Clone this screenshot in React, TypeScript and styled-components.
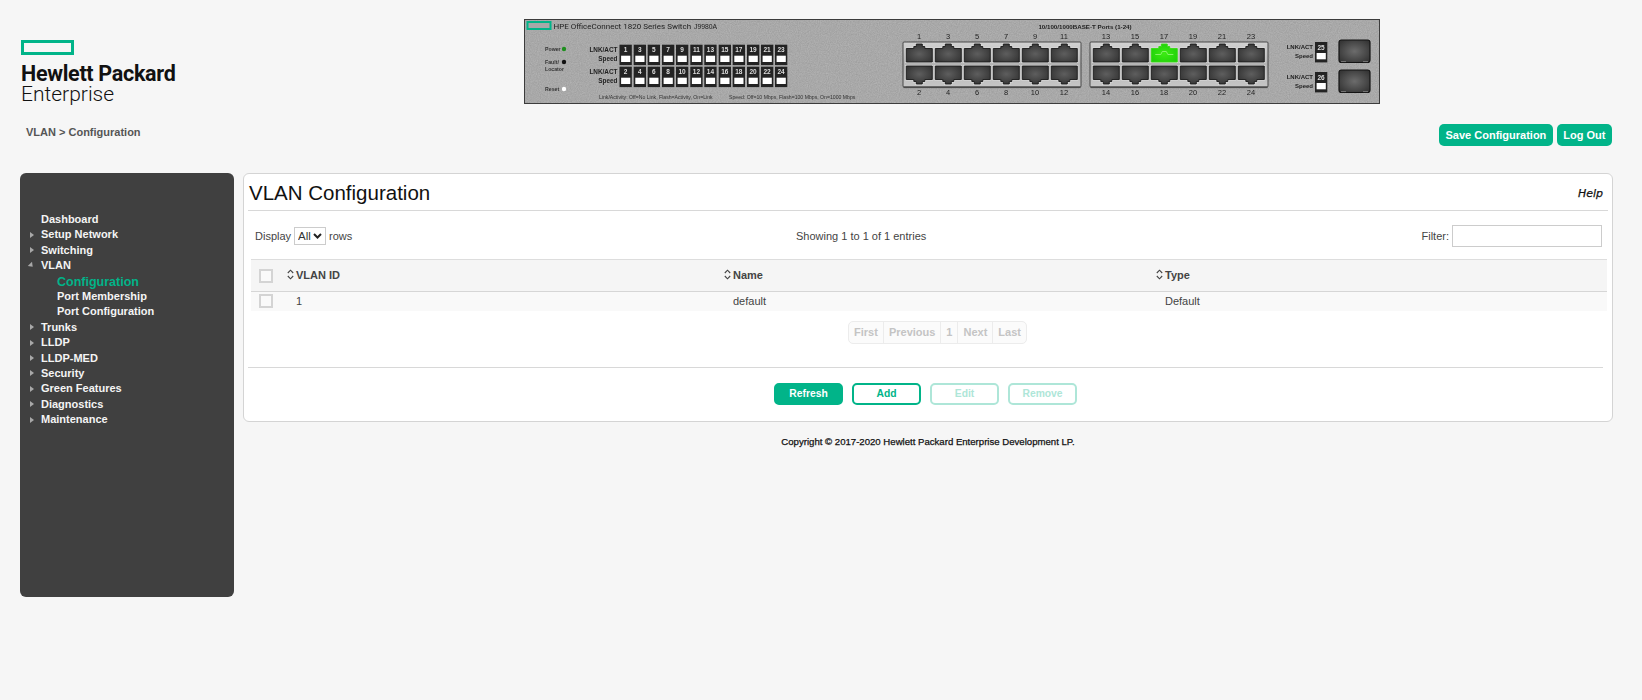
import styled, { createGlobalStyle } from 'styled-components'

const GREEN = '#01b489'

const GlobalStyle = createGlobalStyle`
	html, body {
		margin: 0;
		padding: 0;
		background: #f6f6f6;
		font-family: 'Liberation Sans', Arial, sans-serif;
		color: #333;
	}
`
const Page = styled.div`
	width: 1642px;
	height: 700px;
	overflow: hidden;
	box-sizing: border-box;
	padding: 19px 29px 0 20px;
`
const Header = styled.header`
	display: flex;
	height: 85px;
`
const Logo = styled.div`
	width: 504px;
	padding-top: 21px;
	padding-left: 1px;
	box-sizing: border-box;
`
const LogoMark = styled.div`
	width: 53px;
	height: 15px;
	box-sizing: border-box;
	border: 3px solid ${GREEN};
`
const LogoBold = styled.div`
	font-family: 'Roboto', sans-serif;
	font-weight: 700;
	font-size: 21.5px;
	line-height: 19px;
	letter-spacing: -0.3px;
	color: #111;
	margin-top: 8.5px;
`
const LogoLight = styled.div`
	font-family: 'Roboto', sans-serif;
	font-weight: 300;
	font-size: 21px;
	line-height: 20px;
	color: #111;
	margin-top: 1px;
`
const Faceplate = styled.svg`
	display: block;
	filter: blur(0.25px);
`
const SubHeader = styled.div`
	display: flex;
	align-items: center;
	justify-content: space-between;
	height: 22px;
	margin-top: 20px;
`
const Breadcrumb = styled.div`
	padding: 0 0 6px 6px;
	font-size: 11px;
	font-weight: 700;
	color: #555;
`
const TopActions = styled.div`
	display: flex;
	gap: 4px;
	margin-right: 1px;
`
const TopButton = styled.button`
	height: 22px;
	padding: 0 6.5px;
	border: 0;
	border-radius: 5px;
	background: ${GREEN};
	color: #fff;
	font-family: inherit;
	font-size: 11px;
	font-weight: 700;
`
const Content = styled.div`
	display: grid;
	grid-template-columns: 214px 1370px;
	gap: 9px;
	align-items: start;
	margin-top: 27px;
`
const Sidebar = styled.nav`
	height: 424px;
	box-sizing: border-box;
	padding-top: 39px;
	background: #404040;
	border-radius: 6px;
`
const NavItem = styled.div<{ $sub?: boolean; $active?: boolean }>`
	position: relative;
	height: 15.4px;
	line-height: ${p => (p.$active ? 16.6 : 15.4)}px;
	padding-left: ${p => (p.$sub ? 37 : 21)}px;
	font-size: ${p => (p.$active ? 12.5 : 11)}px;
	font-weight: 700;
	white-space: nowrap;
	color: ${p => (p.$active ? GREEN : '#f4f4f4')};
`
const NavArrow = styled.i<{ $open?: boolean }>`
	position: absolute;
	left: 10px;
	top: 4.5px;
	width: 0;
	height: 0;
	border-style: solid;
	border-width: 3px 0 3px 4px;
	border-color: transparent transparent transparent #a8a8a8;
	transform: ${p => (p.$open ? 'rotate(45deg) translate(-1px, 0)' : 'none')};
`
const Main = styled.div`
	display: flex;
	flex-direction: column;
`
const Panel = styled.section`
	height: 249px;
	box-sizing: border-box;
	padding: 0 4px;
	background: #fff;
	border: 1px solid #d4d4d4;
	border-radius: 6px;
`
const TitleBar = styled.div`
	display: flex;
	align-items: center;
	justify-content: space-between;
	height: 36px;
	border-bottom: 1px solid #d8d8d8;
`
const Title = styled.h1`
	margin: 2px 0 0 1px;
	font-size: 20.5px;
	font-weight: 400;
	color: #111;
`
const Help = styled.span`
	margin: 2px 5px 0 0;
	font-family: 'DejaVu Sans', sans-serif;
	font-size: 11px;
	font-style: italic;
	color: #111;
	-webkit-text-stroke: 0.25px #111;
`
const Toolbar = styled.div`
	display: grid;
	grid-template-columns: 541px auto 1fr;
	align-items: center;
	height: 48px;
	box-sizing: border-box;
	padding: 1px 6px 0 7px;
	font-size: 11px;
	color: #444;
`
const ToolLeft = styled.div`
	display: flex;
	align-items: center;
	gap: 3px;
`
const ToolCenter = styled.div`
	white-space: nowrap;
`
const ToolRight = styled.div`
	display: flex;
	align-items: center;
	justify-content: flex-end;
	gap: 3px;
`
const RowsSelect = styled.select`
	width: 32px;
	height: 18px;
	padding: 0 0 0 3px;
	appearance: none;
	font-family: inherit;
	font-size: 11.5px;
	background: #fff url("data:image/svg+xml,%3Csvg xmlns='http://www.w3.org/2000/svg' width='9' height='6'%3E%3Cpath d='M1 1l3.5 3.5L8 1' fill='none' stroke='%23222' stroke-width='2'/%3E%3C/svg%3E") no-repeat right 3px center;
	border: 1px solid #ccc;
	color: #333;
`
const FilterInput = styled.input`
	width: 150px;
	height: 22px;
	box-sizing: border-box;
	border: 1px solid #ccc;
	background: #fff;
	padding: 0 4px;
`
const Table = styled.table`
	width: 1356px;
	margin-left: 3px;
	border-collapse: collapse;
	table-layout: fixed;
	font-size: 11px;
`
const HeadRow = styled.tr`
	height: 32px;
	background: #f5f5f5;
	border-top: 1px solid #ddd;
	border-bottom: 1px solid #d6d6d6;
`
const BodyRow = styled.tr`
	height: 19px;
	background: #f9f9f9;
`
const Th = styled.th`
	padding: 0;
	text-align: left;
	font-weight: 700;
	color: #444;
`
const Td = styled.td`
	padding: 0 0 0 9px;
	color: #444;
`
const CheckTd = styled.td`
	padding: 0 0 0 8px;
`
const CheckTh = styled.th`
	padding: 0 0 0 8px;
`
const Check = styled.span`
	display: block;
	width: 14px;
	height: 14px;
	box-sizing: border-box;
	border: 2px solid #d4d4d4;
	background: #fafafa;
`
const SortLabel = styled.span`
	display: inline-flex;
	align-items: center;
	gap: 2px;
`
const Pager = styled.div`
	display: flex;
	justify-content: center;
	margin-top: 10px;
	padding-left: 19px;
`
const PagerBox = styled.div`
	display: flex;
	height: 23px;
	box-sizing: border-box;
	border: 1px solid #ececec;
	border-radius: 5px;
	background: #fbfbfb;
`
const PagerCell = styled.span`
	padding: 0 5px;
	line-height: 21px;
	font-size: 11px;
	font-weight: 700;
	color: #c4c4c4;
	& + & {
		border-left: 1px solid #ececec;
	}
`
const Actions = styled.div`
	display: flex;
	justify-content: center;
	gap: 9px;
	margin: 23px 5px 0 0;
	padding-top: 15px;
	border-top: 1px solid #d8d8d8;
`
const ActionButton = styled.button<{ $variant: 'solid' | 'outline' | 'disabled' }>`
	width: 69px;
	height: 22px;
	padding: 0;
	box-sizing: border-box;
	border-radius: 5px;
	font-family: inherit;
	font-size: 10.3px;
	font-weight: 700;
	border: 2px solid ${p => (p.$variant === 'disabled' ? '#aee6d8' : GREEN)};
	background: ${p => (p.$variant === 'solid' ? GREEN : '#fff')};
	color: ${p => (p.$variant === 'solid' ? '#fff' : p.$variant === 'outline' ? GREEN : '#aee6d8')};
`
const Copyright = styled.footer`
	margin-top: 14px;
	text-align: center;
	font-size: 9.6px;
	color: #111;
	-webkit-text-stroke: 0.25px #111;
`

const SortIcon = () => (
	<svg width="7" height="11" viewBox="0 0 7 11" fill="none" stroke="#444" strokeWidth="1.1">
		<path d="M.8 4 3.5 1.2 6.2 4" />
		<path d="M.8 7 3.5 9.8 6.2 7" />
	</svg>
)

const font = "'Liberation Sans', Arial, sans-serif"

const topPorts = [1, 3, 5, 7, 9, 11, 13, 15, 17, 19, 21, 23]
const ledX = [95.5, 109.7, 123.7, 138, 152, 166.3, 180.3, 194.7, 208.7, 223, 237, 251]

const LedColumn = ({ x, y, n }: { x: number; y: number; n: number }) => (
	<g>
		<rect x={x} y={y} width="12.3" height="20.4" fill="#232323" />
		<text x={x + 6.1} y={y + 7.6} fontSize="6.5" fontWeight="700" fill="#ddd" textAnchor="middle">{n}</text>
		<rect x={x + 1.6} y={y + 11} width="9.2" height="6.3" fill="#fff" />
	</g>
)

const PortLabel = ({ x, y, t }: { x: number; y: number; t: string | number }) => (
	<text x={x} y={y} fontSize="7.5" fill="#222" textAnchor="middle">{t}</text>
)

const SOCKET = 'M0 4.5H7.5V2.5H10V0H16V2.5H18.5V4.5H26V18H0Z'

// one RJ45 socket, flipped for the lower row
const Socket = ({ x, y, flip, on }: { x: number; y: number; flip?: boolean; on?: boolean }) => (
	<g transform={flip ? `translate(${x} ${y + 18}) scale(1 -1)` : `translate(${x} ${y})`}>
		<path d={SOCKET} fill="none" stroke="#dedede" strokeWidth="2" />
		<path
			d={SOCKET}
			fill={on ? 'url(#sockOn)' : 'url(#sock)'}
			stroke={on ? '#39d815' : '#1a1a1a'}
			strokeWidth="0.9"
		/>
		{on && <path d="M4 10.5H9.5L11 7.5H15L16.5 10.5H22" stroke="#8ff573" strokeWidth="0.9" fill="none" />}
	</g>
)

const PortBlock = ({ x, first }: { x: number; first: number }) => (
	<g>
		<rect x={x} y="23" width="178" height="45" rx="1" fill="url(#metal)" stroke="#3c3c3c" strokeWidth="0.9" />
		<rect x={x + 0.5} y="67.5" width="177" height="1.6" fill="#4c4c4c" />
		{Array.from({ length: 6 }, (_, i) => (
			<g key={i}>
				<Socket x={x + 3.3 + i * 29} y={25} on={first + i * 2 === 17} />
				<Socket x={x + 3.3 + i * 29} y={47} flip />
				<PortLabel x={x + 16 + i * 29} y={20} t={first + i * 2} />
				<PortLabel x={x + 16 + i * 29} y={75.5} t={first + i * 2 + 1} />
			</g>
		))}
	</g>
)

const SfpCage = ({ y }: { y: number }) => (
	<g>
		<rect x="815" y={y} width="31" height="22.5" rx="2.5" fill="url(#sfp)" stroke="#141414" strokeWidth="1.2" />
		<path d={`M817 ${y + 21.6}H822M839 ${y + 21.6}H844`} stroke="#8a8a8a" strokeWidth="0.8" />
	</g>
)

// the faceplate picture of the switch
const SwitchPanel = () => (
	<Faceplate width="856" height="85" viewBox="0 0 856 85" fontFamily={font}>
		<defs>
			<filter id="grain" x="0" y="0" width="100%" height="100%">
				<feTurbulence type="fractalNoise" baseFrequency="0.9" numOctaves="2" seed="4" />
				<feColorMatrix values="0 0 0 0 0.62  0 0 0 0 0.62  0 0 0 0 0.62  0 0 0 0.55 0" />
			</filter>
			<linearGradient id="metal" x1="0" y1="0" x2="0" y2="1">
				<stop offset="0" stopColor="#d2d2d2" />
				<stop offset="0.5" stopColor="#b4b4b4" />
				<stop offset="1" stopColor="#c6c6c6" />
			</linearGradient>
			<radialGradient id="sock" cx="0.5" cy="0.55" r="0.6">
				<stop offset="0" stopColor="#5e5e5e" />
				<stop offset="1" stopColor="#343434" />
			</radialGradient>
			<radialGradient id="sockOn" cx="0.5" cy="0.55" r="0.6">
				<stop offset="0" stopColor="#3cec12" />
				<stop offset="1" stopColor="#1fd00a" />
			</radialGradient>
			<radialGradient id="sfp" cx="0.5" cy="0.5" r="0.6">
				<stop offset="0" stopColor="#6c6c6c" />
				<stop offset="1" stopColor="#363636" />
			</radialGradient>
		</defs>
		<rect width="856" height="85" fill="#9a9a9a" />
		<rect width="856" height="85" filter="url(#grain)" />
		<rect x="0.5" y="0.5" width="855" height="84" fill="none" stroke="#3c3c3c" />

		<rect x="3.5" y="3" width="23" height="7" fill="#a8a8a8" stroke={GREEN} strokeWidth="2" />
		<text x="29.5" y="9.5" fontFamily="'Roboto', sans-serif" fontSize="8" fill="#222">
			HPE OfficeConnect 1820 Series Switch
		</text>
		<text x="170" y="9.5" fontSize="6.8" fill="#222">J9980A</text>

		<text x="21" y="32" fontSize="5.2" fontWeight="700" fill="#333">Power</text>
		<circle cx="40" cy="30" r="2.2" fill="#1e8f1e" />
		<text x="21" y="45" fontSize="5.2" fontWeight="700" fill="#333">Fault/</text>
		<circle cx="40" cy="43" r="2.2" fill="#111" />
		<text x="21" y="52" fontSize="5.2" fontWeight="700" fill="#333">Locator</text>
		<text x="21" y="72" fontSize="5.2" fontWeight="700" fill="#333">Reset</text>
		<circle cx="40" cy="70" r="2.2" fill="#fff" />

		<text x="93.5" y="33" fontSize="6.4" fontWeight="700" fill="#222" textAnchor="end">LNK/ACT</text>
		<text x="93.5" y="42" fontSize="6.4" fontWeight="700" fill="#222" textAnchor="end">Speed</text>
		<text x="93.5" y="54.5" fontSize="6.4" fontWeight="700" fill="#222" textAnchor="end">LNK/ACT</text>
		<text x="93.5" y="63.5" fontSize="6.4" fontWeight="700" fill="#222" textAnchor="end">Speed</text>
		{ledX.map((x, i) => (
			<g key={x}>
				<LedColumn x={x} y={25.7} n={topPorts[i]} />
				<LedColumn x={x} y={47.7} n={topPorts[i] + 1} />
			</g>
		))}
		<text x="75" y="79.5" fontSize="5.15" fill="#333">Link/Activity: Off=No Link, Flash=Activity, On=Link</text>
		<text x="205" y="79.5" fontSize="5.15" fill="#333">Speed: Off=10 Mbps, Flash=100 Mbps, On=1000 Mbps</text>

		<text x="561" y="10" fontSize="6.2" fontWeight="700" fill="#222" textAnchor="middle">10/100/1000BASE-T Ports (1-24)</text>
		<PortBlock x={379} first={1} />
		<PortBlock x={566} first={13} />

		<text x="789" y="30" fontSize="6" fontWeight="700" fill="#222" textAnchor="end">LNK/ACT</text>
		<text x="789" y="39" fontSize="6" fontWeight="700" fill="#222" textAnchor="end">Speed</text>
		<LedColumn x={791} y={23} n={25} />
		<text x="789" y="60" fontSize="6" fontWeight="700" fill="#222" textAnchor="end">LNK/ACT</text>
		<text x="789" y="69" fontSize="6" fontWeight="700" fill="#222" textAnchor="end">Speed</text>
		<LedColumn x={791} y={53} n={26} />
		<SfpCage y={21} />
		<SfpCage y={51} />
	</Faceplate>
)

const navTop = ['Setup Network', 'Switching']
const navBottom = ['Trunks', 'LLDP', 'LLDP-MED', 'Security', 'Green Features', 'Diagnostics', 'Maintenance']

export default function App() {
	return (
		<Page>
			<GlobalStyle />
			<Header>
				<Logo>
					<LogoMark />
					<LogoBold>Hewlett Packard</LogoBold>
					<LogoLight>Enterprise</LogoLight>
				</Logo>
				<SwitchPanel />
			</Header>
			<SubHeader>
				<Breadcrumb>VLAN &gt; Configuration</Breadcrumb>
				<TopActions>
					<TopButton>Save Configuration</TopButton>
					<TopButton>Log Out</TopButton>
				</TopActions>
			</SubHeader>
			<Content>
				<Sidebar>
					<NavItem>Dashboard</NavItem>
					{navTop.map(item => (
						<NavItem key={item}>
							<NavArrow />
							{item}
						</NavItem>
					))}
					<NavItem>
						<NavArrow $open />
						VLAN
					</NavItem>
					<NavItem $sub $active>Configuration</NavItem>
					<NavItem $sub>Port Membership</NavItem>
					<NavItem $sub>Port Configuration</NavItem>
					{navBottom.map(item => (
						<NavItem key={item}>
							<NavArrow />
							{item}
						</NavItem>
					))}
				</Sidebar>
				<Main>
					<Panel>
						<TitleBar>
							<Title>VLAN Configuration</Title>
							<Help>Help</Help>
						</TitleBar>
						<Toolbar>
							<ToolLeft>
								Display
								<RowsSelect defaultValue="All">
									<option>All</option>
								</RowsSelect>
								rows
							</ToolLeft>
							<ToolCenter>Showing 1 to 1 of 1 entries</ToolCenter>
							<ToolRight>
								Filter:
								<FilterInput />
							</ToolRight>
						</Toolbar>
						<Table>
							<colgroup>
								<col style={{ width: 36 }} />
								<col style={{ width: 437 }} />
								<col style={{ width: 432 }} />
								<col />
							</colgroup>
							<thead>
								<HeadRow>
									<CheckTh><Check /></CheckTh>
									<Th><SortLabel><SortIcon />VLAN ID</SortLabel></Th>
									<Th><SortLabel><SortIcon />Name</SortLabel></Th>
									<Th><SortLabel><SortIcon />Type</SortLabel></Th>
								</HeadRow>
							</thead>
							<tbody>
								<BodyRow>
									<CheckTd><Check /></CheckTd>
									<Td>1</Td>
									<Td>default</Td>
									<Td>Default</Td>
								</BodyRow>
							</tbody>
						</Table>
						<Pager>
							<PagerBox>
								<PagerCell>First</PagerCell>
								<PagerCell>Previous</PagerCell>
								<PagerCell>1</PagerCell>
								<PagerCell>Next</PagerCell>
								<PagerCell>Last</PagerCell>
							</PagerBox>
						</Pager>
						<Actions>
							<ActionButton $variant="solid">Refresh</ActionButton>
							<ActionButton $variant="outline">Add</ActionButton>
							<ActionButton $variant="disabled">Edit</ActionButton>
							<ActionButton $variant="disabled">Remove</ActionButton>
						</Actions>
					</Panel>
					<Copyright>Copyright © 2017-2020 Hewlett Packard Enterprise Development LP.</Copyright>
				</Main>
			</Content>
		</Page>
	)
}
